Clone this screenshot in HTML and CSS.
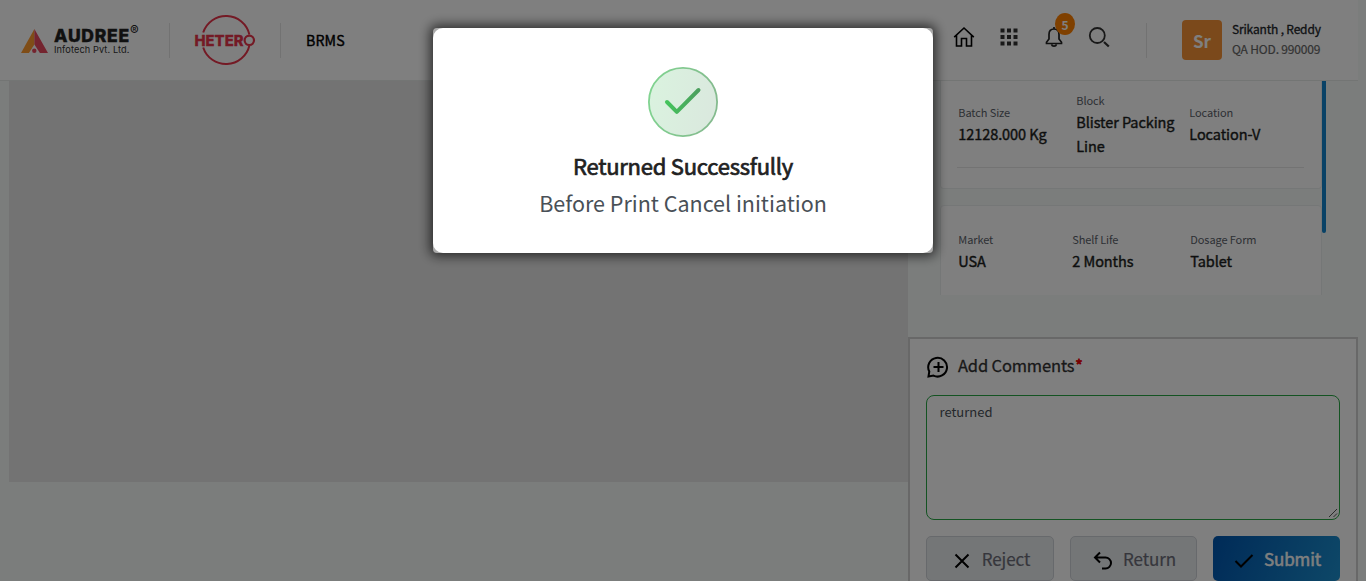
FILE: index.html
```html
<!DOCTYPE html>
<html lang="en">
<head>
<meta charset="utf-8">
<title>BRMS</title>
<link rel="stylesheet" href="styles.css">
</head>
<body>
<header class="header">
  <div class="brand">
    <svg class="brand-mark" viewBox="0 0 27 24"><path d="M13.400 0 0 24h8.500l4.900-8z" fill="#ff9a2e"/><path d="M13.400 0v16L8.500 24H27z" fill="#e8495f"/><path d="m13.400 15.500-5.500 8.500h11z" fill="#fff"/><circle cx="13.300" cy="21.700" r="2.200" fill="#e8495f"/></svg>
    <div class="brand-text">
      <div class="brand-name">AUDREE<span class="reg">®</span></div>
      <div class="brand-sub">Infotech Pvt. Ltd.</div>
    </div>
  </div>
  <svg class="hetero" viewBox="0 0 62 52">
    <path d="M9.200 18.500A24 24 0 0 1 55.400 20.500M55.400 31.500A24 24 0 0 1 9.200 33.500" fill="none" stroke="#e8344a" stroke-width="2"/>
    <text x="0.500" y="31.700" textLength="49" lengthAdjust="spacingAndGlyphs" class="hetero-text">HETER</text>
    <circle cx="55.300" cy="26.300" r="4.700" fill="none" stroke="#e8344a" stroke-width="2.200"/>
  </svg>
  <div class="app-name">BRMS</div>
  <nav class="tools">
    <svg class="tool" viewBox="0 0 24 24"><path d="M2.200 12.200 12 3l9.800 9.200M4.500 10.500V21h5v-7.500h5V21h5V10.500" fill="none" stroke="#000" stroke-width="1.600"/></svg>
    <svg class="tool" viewBox="0 0 24 24"><path d="M3.500 3.500h4v4h-4zm6.500 0h4v4h-4zm6.500 0h4v4h-4zM3.500 10h4v4h-4zm6.500 0h4v4h-4zm6.500 0h4v4h-4zM3.500 16.500h4v4h-4zm6.500 0h4v4h-4zm6.500 0h4v4h-4z" fill="#333"/></svg>
    <div class="bell"><svg class="tool" viewBox="0 0 24 24"><path d="M12 2v2M12 4c-3.500 0-5 2.500-5 5.500v4.500l-2.500 3.300v1.200h15v-1.200L17 14V9.500C17 6.500 15.500 4 12 4zM9.500 19.500c.7 2.200 4.300 2.200 5 0" fill="none" stroke="#222" stroke-width="1.700"/></svg><span class="badge">5</span></div>
    <svg class="tool" viewBox="0 0 24 24"><circle cx="10.300" cy="10.500" r="7.500" fill="none" stroke="#333" stroke-width="1.800"/><path d="m17 17 4.800 4.500" stroke="#333" stroke-width="2.200"/></svg>
  </nav>
  <div class="user">
    <div class="avatar">Sr</div>
    <div class="user-text">
      <div class="user-name">Srikanth , Reddy</div>
      <div class="user-role">QA HOD. 990009</div>
    </div>
  </div>
</header>
<main class="main">
  <section class="preview"></section>
  <aside class="side">
    <div class="details">
      <div class="card first">
        <div class="fields">
          <div class="field c1"><div class="label">Batch Size</div><div class="value">12128.000 Kg</div></div>
          <div class="field c2"><div class="label">Block</div><div class="value">Blister Packing<br>Line</div></div>
          <div class="field c3"><div class="label">Location</div><div class="value">Location-V</div></div>
        </div>
      </div>
      <div class="card second">
        <div class="fields">
          <div class="field c1"><div class="label">Market</div><div class="value">USA</div></div>
          <div class="field c2"><div class="label">Shelf Life</div><div class="value">2 Months</div></div>
          <div class="field c3"><div class="label">Dosage Form</div><div class="value">Tablet</div></div>
        </div>
      </div>
      <div class="thumb"></div>
    </div>
    <div class="comments">
      <div class="comments-title">
        <svg class="c-icon" viewBox="0 0 22 22"><path d="M1.500 20.500l.8-5A9.400 9.400 0 1 1 6.500 19.600zM11.500 6v10M6.500 11h10" fill="none" stroke="#000" stroke-width="2"/></svg>
        <span>Add Comments</span><span class="star">*</span>
      </div>
      <div class="textarea">returned<svg class="grip" viewBox="0 0 10 10"><path d="M1 9 9 1M5.500 9 9 5.500" stroke="#555" fill="none"/></svg></div>
      <div class="actions">
        <div class="btn"><svg class="b-icon" viewBox="0 0 20 20"><path d="m3.500 3.500 13 13M16.500 3.500l-13 13" fill="none" stroke="#000" stroke-width="2"/></svg><span>Reject</span></div>
        <div class="btn return"><svg class="b-icon" viewBox="0 0 20 20"><path d="M7 1.500 2 6.500l5 5M2 6.500h10.500a5.500 5.500 0 0 1 0 11H9" fill="none" stroke="#000" stroke-width="2"/></svg><span>Return</span></div>
        <div class="btn primary"><svg class="b-icon" viewBox="0 0 20 20"><path d="m1.500 10 5.500 5.500L18.500 4" fill="none" stroke="#000" stroke-width="2"/></svg><span>Submit</span></div>
      </div>
    </div>
  </aside>
</main>
<div class="overlay">
  <div class="dialog">
    <div class="dialog-body">
      <svg class="success" viewBox="0 0 70 70">
        <defs>
          <linearGradient id="ring" x1="0" y1="0" x2="1" y2="0.200"><stop offset="0" stop-color="#80d590"/><stop offset="1" stop-color="#84bb8e"/></linearGradient>
          <linearGradient id="disc" x1="0" y1="0" x2="1" y2="0.200"><stop offset="0" stop-color="#daf3df"/><stop offset="1" stop-color="#dae9de"/></linearGradient>
          <linearGradient id="tick" x1="0" y1="0" x2="1" y2="0"><stop offset="0" stop-color="#44c35c"/><stop offset="1" stop-color="#4c9f5e"/></linearGradient>
        </defs>
        <circle cx="35" cy="35" r="34.100" fill="url(#disc)" stroke="url(#ring)" stroke-width="1.800"/>
        <path d="m19 35 9.800 9.800L50.500 23" fill="none" stroke="url(#tick)" stroke-width="4" stroke-linecap="round" stroke-linejoin="round"/>
      </svg>
      <h2 class="dialog-title">Returned Successfully</h2>
      <p class="dialog-text">Before Print Cancel initiation</p>
    </div>
  </div>
</div>
</body>
</html>
```
FILE: styles.css
```css
* { box-sizing: border-box; }
body { margin: 0; height: 581px; overflow: hidden; background: #f6faf9; color: #212529; font-family: "Noto Sans CJK SC", "Open Sans", sans-serif; }
svg { display: block; flex: none; }

.header { display: flex; align-items: center; width: 1358px; height: 81px; background: #fff; border-bottom: 1px solid #e6eae9; }
.brand { display: flex; width: 170px; height: 35px; padding-left: 21px; border-right: 1px solid #e4e4e4; }
.brand-mark { width: 27px; height: 24px; margin-top: 6px; }
.brand-text { margin-left: 6px; font-family: Inter, sans-serif; white-space: nowrap; }
.brand-name { display: flex; height: 20px; font-size: 17.500px; line-height: 25px; font-weight: 800; letter-spacing: .75px; color: #222; -webkit-text-stroke: .4px #222; }
.reg { font-size: 13px; font-weight: 500; line-height: 14px; letter-spacing: 0; -webkit-text-stroke: 0; }
.brand-sub { font-size: 9.200px; line-height: 13px; letter-spacing: .1px; color: #333; }
.hetero { width: 62px; height: 52px; margin-left: 24px; margin-top: -1px; }
.hetero-text { font-family: Inter, sans-serif; font-size: 14.500px; font-weight: 800; fill: #e8344a; stroke: #e8344a; stroke-width: .3px; }
.app-name { height: 35px; line-height: 35px; margin-left: 24px; padding-left: 25px; border-left: 1px solid #e4e4e4; font-size: 14.200px; letter-spacing: .1px; -webkit-text-stroke: .4px #000; color: #000; }
.tools { display: flex; gap: 21px; margin-left: auto; padding-bottom: 6px; }
.tool { width: 24px; height: 24px; }
.bell { position: relative; }
.badge { position: absolute; left: 13px; top: -12px; width: 20px; height: 22px; border-radius: 50%; background: #ff8000; color: #fff; font-size: 12px; font-weight: 700; line-height: 23px; text-align: center; }
.user { display: flex; align-items: center; width: 212px; height: 35px; margin-left: 35px; padding-left: 35px; border-left: 1px solid #e4e4e4; }
.avatar { flex: none; width: 40px; height: 40px; border-radius: 4px; background: #f79337; color: #fff; font-size: 17px; font-weight: 700; line-height: 42px; text-align: center; }
.user-text { margin: -2px 0 0 10px; white-space: nowrap; font-size: 12px; line-height: 20px; letter-spacing: -.17px; }
.user-name { -webkit-text-stroke: .3px #212529; }
.user-role { color: #666; -webkit-text-stroke: .2px #666; }

.main { display: flex; width: 1358px; height: 500px; padding-left: 9px; }
.preview { width: 899px; height: 401px; background: #e6e6e6; }
.side { width: 450px; }
.details { display: flex; flex-direction: column; position: relative; height: 214px; margin: 0 32px 42px; overflow: hidden; }
.card { flex: none; background: #fff; border: 1px solid #ebefee; width: 382px; }
.first { height: 108px; border-top: 0; border-radius: 0 0 4px 4px; padding: 0 17px 0 16px; }
.second { height: 110px; margin-top: 16px; border-radius: 4px 4px 0 0; padding: 24px 17px 0 16px; }
.fields { display: flex; align-items: center; padding-left: 1px; }
.first .fields { height: 87px; border-bottom: 1px solid #e6e6e6; }
.first .c1 { width: 118px; }
.first .c2 { width: 113px; }
.second .c1 { width: 114px; }
.second .c2 { width: 118px; }
.label { padding-left: .3px; font-size: 11px; line-height: 18px; letter-spacing: -.1px; color: #5b6169; white-space: nowrap; }
.value { position: relative; top: 1px; padding-left: .3px; font-size: 14.500px; line-height: 24px; letter-spacing: -.08px; color: #1c1e20; -webkit-text-stroke: .4px #1c1e20; white-space: nowrap; }
.thumb { position: absolute; right: 0; top: 0; width: 4px; height: 152px; border-radius: 0 0 2px 2px; background: #1284cc; }

.comments { height: 244px; padding: 16px 16px 0; background: #fff; border: 2px solid #d0d0d0; border-bottom: 0; }
.comments-title { display: flex; align-items: center; height: 24px; font-size: 16.500px; line-height: 24px; letter-spacing: -.16px; color: #333; -webkit-text-stroke: .3px #333; }
.comments-title span { margin-top: -5px; }
.c-icon { width: 22px; height: 22px; margin: 0 9px 0 1px; }
.comments-title .star { align-self: flex-start; margin: -1px 0 0 1px; color: #f00000; font-size: 16px; line-height: 22px; -webkit-text-stroke: .8px #f00000; }
.textarea { position: relative; height: 125px; margin-top: 16px; border: 1px solid #28a745; border-radius: 8px; padding: 5px 12.500px; font-size: 13px; line-height: 22px; color: #495057; }
.grip { position: absolute; right: 1px; bottom: 1px; width: 10px; height: 10px; }
.actions { display: flex; justify-content: space-between; margin-top: 16px; }
.btn { display: flex; align-items: center; justify-content: center; gap: 10px; width: 128px; height: 45px; padding-left: 2px; border: 1px solid #cfd3d8; border-radius: 5px; background: #e9ecef; color: #6c6c78; font-size: 17px; line-height: 24px; letter-spacing: -.1px; -webkit-text-stroke: .2px #6c6c78; }
.btn span { margin-top: 1px; }
.b-icon { width: 20px; height: 20px; margin-top: 4px; }
.return { width: 127px; }
.primary { border: 0; width: 127px; background: linear-gradient(110deg, #0056b0, #1c90d0); color: #fff; -webkit-text-stroke: .5px #fff; }

.overlay { position: fixed; inset: 0; background: rgba(0, 0, 0, .5); }
.dialog { width: 500px; height: 225px; margin: 28px auto 0; border-radius: 4px; background: #aaa; box-shadow: 0 0 12px 3px rgba(0, 0, 0, .65); }
.dialog-body { display: flex; flex-direction: column; align-items: center; height: 225px; padding-top: 39px; border-radius: 10px; background: #fff; }
.success { width: 70px; height: 70px; }
.dialog-title { margin: 12px 0 0; font-size: 22px; line-height: 32px; font-weight: 400; letter-spacing: -.24px; color: #212121; -webkit-text-stroke: .7px #212121; }
.dialog-text { margin: 5px 0 0; font-size: 21.500px; line-height: 34px; color: #495057; }
```
